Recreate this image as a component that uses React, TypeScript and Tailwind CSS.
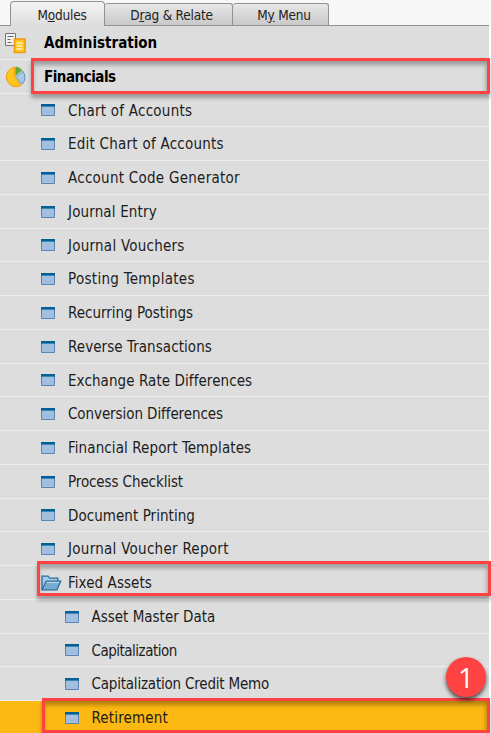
import clsx from "clsx";

type MenuRow = {
  label: string;
  icon: "docs" | "pie" | "window" | "folder";
  level: number;
  tracking?: string;
  selected?: boolean;
  highlight?: string;
};

const rows: MenuRow[] = [
  { label: "Administration", icon: "docs", level: 0 },
  {
    label: "Financials",
    icon: "pie",
    level: 0,
    tracking: "tracking-[-0.5px]",
    highlight: "left-[31px] right-[-1px] -top-[2px] h-[36px]",
  },
  { label: "Chart of Accounts", icon: "window", level: 1, tracking: "tracking-[0.24px]" },
  { label: "Edit Chart of Accounts", icon: "window", level: 1, tracking: "tracking-[0.24px]" },
  { label: "Account Code Generator", icon: "window", level: 1, tracking: "tracking-[0.26px]" },
  { label: "Journal Entry", icon: "window", level: 1, tracking: "tracking-[0.15px]" },
  { label: "Journal Vouchers", icon: "window", level: 1, tracking: "tracking-[0.25px]" },
  { label: "Posting Templates", icon: "window", level: 1, tracking: "tracking-[0.3px]" },
  { label: "Recurring Postings", icon: "window", level: 1 },
  { label: "Reverse Transactions", icon: "window", level: 1, tracking: "tracking-[0.07px]" },
  { label: "Exchange Rate Differences", icon: "window", level: 1, tracking: "tracking-[0.08px]" },
  { label: "Conversion Differences", icon: "window", level: 1, tracking: "tracking-[-0.08px]" },
  { label: "Financial Report Templates", icon: "window", level: 1, tracking: "tracking-[0.1px]" },
  { label: "Process Checklist", icon: "window", level: 1, tracking: "tracking-[-0.1px]" },
  { label: "Document Printing", icon: "window", level: 1, tracking: "tracking-[0.05px]" },
  { label: "Journal Voucher Report", icon: "window", level: 1, tracking: "tracking-[0.28px]" },
  {
    label: "Fixed Assets",
    icon: "folder",
    level: 1,
    tracking: "tracking-[0.08px]",
    highlight: "left-[37px] right-[-2px] -top-[5px] h-[35px]",
  },
  { label: "Asset Master Data", icon: "window", level: 2 },
  { label: "Capitalization", icon: "window", level: 2, tracking: "tracking-[-0.5px]" },
  { label: "Capitalization Credit Memo", icon: "window", level: 2, tracking: "tracking-[-0.2px]" },
  {
    label: "Retirement",
    icon: "window",
    level: 2,
    tracking: "tracking-[0.15px]",
    selected: true,
    highlight: "left-[42px] right-[-1px] -top-[3px] h-[35px]",
  },
];

function DocsIcon() {
  return (
    <svg width="22" height="22" viewBox="0 0 22 22" className="ml-[4px]">
      <path d="M1.5 1.5h10v12h-10z" fill="#f3f3f3" stroke="#777" />
      <path d="M3.5 4.5h6M3.5 7.5h3M3.5 10.5h4" stroke="#666" />
      <path d="M10.5 7h10.5v13.5H10.5z" fill="#ffc61e" stroke="#ee9b0c" strokeWidth="1.6" />
      <path d="M12.5 11h6M12.5 14h6M12.5 17h6" stroke="#fff3c0" strokeWidth="1.3" />
    </svg>
  );
}

function PieIcon() {
  return (
    <svg width="22" height="22" viewBox="0 0 22 22" className="ml-[4px]">
      <path d="M10.6 11V1.2A9.8 9.8 0 1 0 17 19.4Z" fill="#ffc61e" stroke="#ee9b0c" />
      <path d="M11.8 9.6V1Q15.3 1.3 17.8 4Z" fill="#5fae32" stroke="#4b9830" strokeWidth="0.6" />
      <path d="M12.4 11.4 18.6 5A9.8 9.8 0 0 1 18.2 18.2Z" fill="#a9c9e6" stroke="#4d83ae" strokeWidth="0.8" />
    </svg>
  );
}

function WindowIcon() {
  return (
    <svg width="14" height="12" viewBox="0 0 14 12">
      <path d="M0.5 0.5h13v11H.5z" fill="#a3bfdf" stroke="#5b83b3" />
      <path d="M0 0h14v2.6H0z" fill="#005f94" />
    </svg>
  );
}

function FolderIcon() {
  return (
    <svg width="21" height="16" viewBox="0 0 21 16">
      <path
        d="M1 14.5V1.2h6l1.5 2h8.3v3"
        fill="#a9cbe5"
        stroke="#23719f"
        strokeWidth="1.3"
      />
      <path
        d="M1 14.8 5.2 6.2h14.6L16 14.8Z"
        fill="#79abd2"
        stroke="#23719f"
        strokeWidth="1.2"
      />
      <path d="M6 7.4h12" stroke="#c2dcee" />
    </svg>
  );
}

function RowIcon({ icon, level }: { icon: MenuRow["icon"]; level: number }) {
  if (icon === "docs") return <DocsIcon />;
  if (icon === "pie") return <PieIcon />;
  return (
    <span
      className={clsx("flex shrink-0", level === 2 ? "ml-[65px] w-[26.5px]" : "ml-[41px] w-[27px]")}
    >
      {icon === "folder" ? <FolderIcon /> : <WindowIcon />}
    </span>
  );
}

function Row({ row }: { row: MenuRow }) {
  return (
    <li
      className={clsx(
        "relative flex h-[33.75px] shrink-0 items-center border-b pt-px",
        row.selected ? "border-[#fcb813] bg-[#fcb813]" : "border-[#ededed]",
      )}
    >
      <RowIcon icon={row.icon} level={row.level} />
      <span
        className={clsx(
          "whitespace-nowrap",
          row.level === 0
            ? "ml-[18px] pt-px text-[15px] font-bold text-black"
            : "pt-px text-[15px] text-[#1c1c1c]",
          row.tracking,
        )}
      >
        {row.label}
      </span>
      {row.highlight && (
        <div
          className={clsx(
            "absolute z-10 border-3 border-[#ff4343] shadow-[0_4px_4px_rgba(0,0,0,0.3),inset_-1px_4px_4px_rgba(0,0,0,0.3)]",
            row.highlight,
          )}
        />
      )}
      {row.selected && (
        <div className="absolute -top-[44px] right-[3px] z-20 flex size-[40px] items-center justify-center rounded-full bg-[#ff4343] font-['Open_Sans',sans-serif] text-[28px] text-white shadow-[0_3px_4px_rgba(0,0,0,0.65)] [font-stretch:normal]">
          1
        </div>
      )}
    </li>
  );
}

function Tabs() {
  return (
    <div className="flex h-[26px] items-end border-b border-[#929292] pl-[10px] text-[13.5px] tracking-[-0.2px] text-[#222]">
      <div className="-mb-px flex h-[25px] w-[95px] items-center justify-center rounded-t-[4px] border border-b-0 border-[#929292] bg-linear-to-b from-[#f3f3f3] to-[#dddddd] pt-[2px] pl-[9px]">
        <span>M<u>o</u>dules</span>
      </div>
      <div className="flex h-[22px] w-[128px] items-center justify-center rounded-t-[3px] border border-b-0 border-l-0 border-[#929292] bg-linear-to-b from-[#e7e7e7] to-[#c9c9c9] pt-px pl-[6px]">
        <span>D<u>r</u>ag &amp; Relate</span>
      </div>
      <div className="flex h-[22px] w-[96px] items-center justify-center rounded-t-[3px] border border-b-0 border-l-0 border-[#929292] bg-linear-to-b from-[#e7e7e7] to-[#c9c9c9] pt-px pl-[7px]">
        <span>M<u>y</u> Menu</span>
      </div>
    </div>
  );
}

export default function App() {
  return (
    <div className="h-[733px] w-[491px] overflow-hidden bg-white pr-[2px] font-['DejaVu_Sans_Condensed','DejaVu_Sans',sans-serif] [font-stretch:condensed]">
      <div className="bg-[#f7f7f7]">
        <Tabs />
      </div>
      <ul className="flex flex-col bg-[#dddddd]">
        {rows.map((row) => (
          <Row key={row.label} row={row} />
        ))}
      </ul>
    </div>
  );
}
